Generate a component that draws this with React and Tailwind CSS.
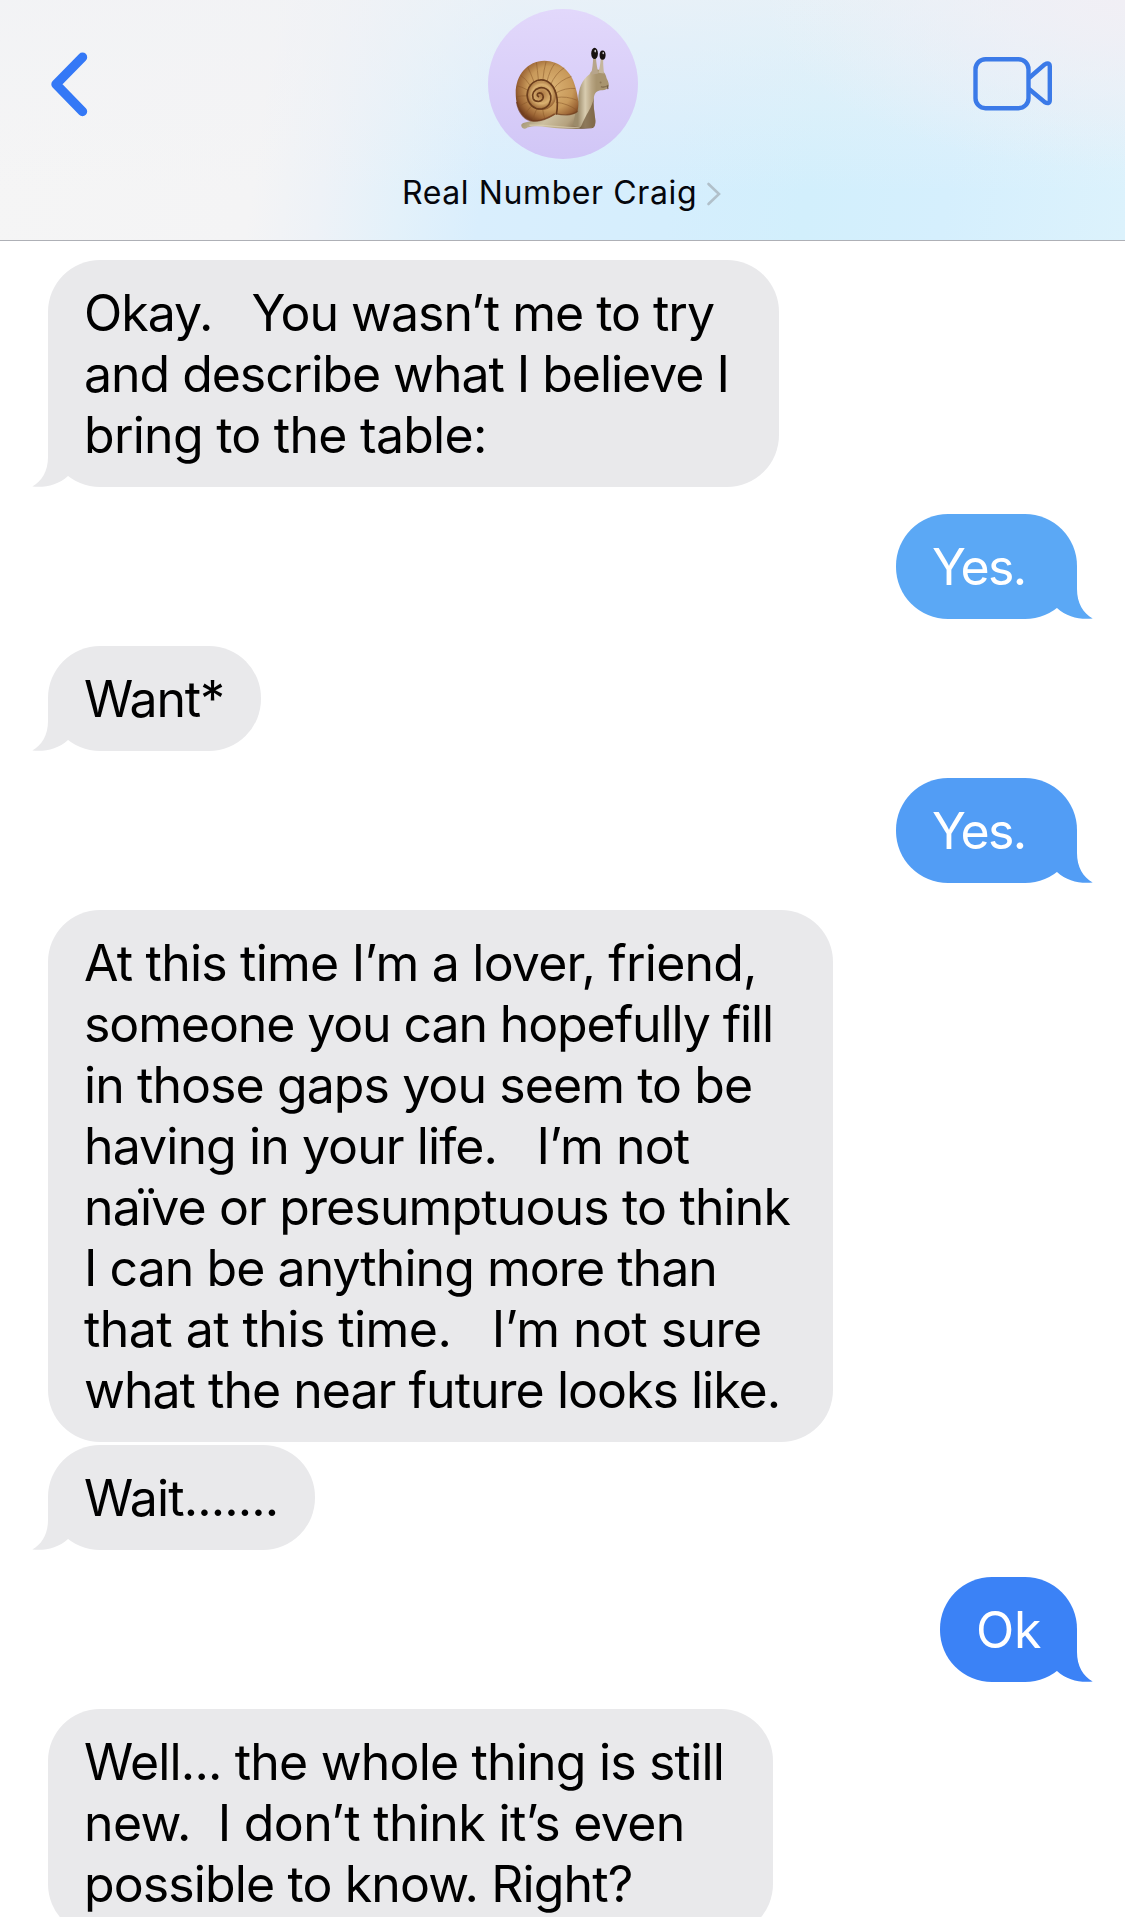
import clsx from "clsx";

// each line keeps its own tracking, [text, letter spacing in px]
const messages = [
  {
    id: 1,
    from: "them",
    tail: true,
    size: "w-[731px] mt-[19px]",
    lines: [
      ["Okay.   You wasn’t me to try", -1.01],
      ["and describe what I believe I", -1.04],
      ["bring to the table:", -0.74],
    ],
  },
  {
    id: 2,
    from: "me",
    tail: true,
    size: "w-[181px] mt-[27px]",
    color: "bg-[#5ba8f5] text-[#5ba8f5]",
    lines: [["Yes.", -1.6]],
  },
  {
    id: 3,
    from: "them",
    tail: true,
    size: "w-[213px] mt-[27px]",
    lines: [["Want*", -1.2]],
  },
  {
    id: 4,
    from: "me",
    tail: true,
    size: "w-[181px] mt-[27px]",
    color: "bg-[#529df5] text-[#529df5]",
    lines: [["Yes.", -1.6]],
  },
  {
    id: 5,
    from: "them",
    tail: false,
    size: "w-[785px] mt-[27px]",
    lines: [
      ["At this time I’m a lover, friend,", -0.79],
      ["someone you can hopefully fill", -1.11],
      ["in those gaps you seem to be", -0.92],
      ["having in your life.   I’m not", -0.92],
      ["naïve or presumptuous to think", -0.86],
      ["I can be anything more than", -0.95],
      ["that at this time.   I’m not sure", -0.55],
      ["what the near future looks like.", -0.98],
    ],
  },
  {
    id: 6,
    from: "them",
    tail: true,
    size: "w-[267px] mt-[3px]",
    lines: [["Wait.......", -0.9]],
  },
  {
    id: 7,
    from: "me",
    tail: true,
    size: "w-[137px] mt-[27px]",
    color: "bg-[#3b82f6] text-[#3b82f6]",
    lines: [["Ok", -0.3]],
  },
  {
    id: 8,
    from: "them",
    tail: false,
    size: "w-[725px] mt-[27px]",
    lines: [
      ["Well... the whole thing is still", -0.82],
      ["new.  I don’t think it’s even", -0.65],
      ["possible to know. Right?", -0.88],
    ],
  },
];

const Snail = () => (
  <svg className="w-[150px] h-[150px]" viewBox="26 27 449 449" fill="none">
    <defs>
      <linearGradient id="body" x1="0" y1="0" x2="1" y2="0.25">
        <stop offset="0" stopColor="#8f7f60" />
        <stop offset="0.45" stopColor="#cdc0a0" />
        <stop offset="0.75" stopColor="#b5a27f" />
        <stop offset="1" stopColor="#775f42" />
      </linearGradient>
      <linearGradient id="neck" x1="295" y1="0" x2="350" y2="0" gradientUnits="userSpaceOnUse">
        <stop offset="0" stopColor="#9c8b6a" />
        <stop offset="0.4" stopColor="#d8ccb0" />
        <stop offset="0.75" stopColor="#b9a684" />
        <stop offset="1" stopColor="#a8946f" />
      </linearGradient>
      <radialGradient id="shell" cx="0.55" cy="0.45" r="0.6">
        <stop offset="0" stopColor="#dcb476" />
        <stop offset="0.6" stopColor="#c8995a" />
        <stop offset="0.86" stopColor="#9c6535" />
        <stop offset="1" stopColor="#74401f" />
      </radialGradient>
      <radialGradient id="whorl" cx="0.5" cy="0.45" r="0.55">
        <stop offset="0" stopColor="#a87440" />
        <stop offset="0.6" stopColor="#d9b070" />
        <stop offset="1" stopColor="#935d2e" />
      </radialGradient>
    </defs>
    {/* foot */}
    <path
      d="M126 378C124 370 132 367 140 366C165 360 190 346 225 338L300 325C325 320 344 335 347 360C348 374 346 382 336 384C290 388 240 385 205 381C180 377 160 377 144 382C137 388 128 386 126 378Z"
      fill="url(#body)"
    />
    <path d="M150 375C200 372 250 384 300 382" stroke="#e0d5b8" strokeWidth="4" opacity="0.6" />
    {/* neck and head */}
    <path
      d="M296 300C297 262 307 240 330 222C333 214 340 209 352 208C368 208 378 218 381 234C386 243 389 252 387 260C384 268 375 271 364 270C352 271 345 278 343 292C340 315 345 335 347 356C348 374 344 382 330 383C312 384 292 382 280 374Z"
      fill="url(#neck)"
    />
    <path d="M343 292C338 320 322 340 317 352C308 368 306 380 300 383H330C345 383 348 372 347 356C345 335 340 315 343 292Z" fill="#6d5538" opacity="0.7" />
    <path d="M364 260C372 262 380 260 386 255" stroke="#7c6649" strokeWidth="3" />
    <circle cx="363" cy="247" r="3" fill="#8d7755" />
    <path d="M384 258L385 267" stroke="#5c4a38" strokeWidth="3" />
    {/* stalks and eyes */}
    <path d="M334 224C339 205 340 190 341 172H349C350 192 354 205 356 220Z" fill="#b7a58b" />
    <path d="M356 218C361 203 362 190 364 174H371C370 192 372 204 373 220Z" fill="#c5b69c" />
    <ellipse cx="345" cy="160" rx="10" ry="17" fill="#17110f" />
    <ellipse cx="369" cy="165" rx="9" ry="14" fill="#17110f" />
    <ellipse cx="347" cy="153" rx="2.5" ry="4" fill="#c9c5c8" />
    <ellipse cx="371" cy="159" rx="2.5" ry="3.5" fill="#c9c5c8" />
    {/* shell */}
    <path
      d="M231 341C265 347 287 343 294 332C300 310 294 280 286 255C276 215 240 183 195 182C145 182 108 225 109 280C109 325 130 360 162 363C190 364 212 350 231 341Z"
      fill="url(#shell)"
    />
    <g stroke="#875528" strokeWidth="2.5" opacity="0.6">
      <path d="M229 306Q265 310 292 330" />
      <path d="M230 292Q262 287 292 300" />
      <path d="M228 279Q257 262 287 265" />
      <path d="M222 266Q244 238 276 229" />
      <path d="M213 254Q228 220 254 203" />
      <path d="M202 246Q211 209 226 190" />
      <path d="M190 241Q193 208 200 184" />
      <path d="M177 240Q174 210 171 187" />
      <path d="M164 246Q153 217 145 201" />
      <path d="M153 257Q138 234 124 226" />
      <path d="M147 271Q126 259 113 257" />
      <path d="M145 287Q126 286 110 290" />
      <path d="M149 303Q131 311 117 320" />
      <path d="M157 317Q143 330 135 346" />
      <path d="M172 326Q164 342 160 360" />
      <path d="M190 328Q191 342 196 354" />
    </g>
    <path d="M231 341C260 347 287 343 294 332" stroke="#70401f" strokeWidth="4" opacity="0.7" />
    <circle cx="187" cy="286" r="43" fill="url(#whorl)" />
    <path
      d="M231 341C238 300 231 258 203 243C172 230 145 252 143 284C144 312 165 329 188 326C208 322 216 305 214 287C210 268 195 260 180 263C163 268 156 282 161 295C167 306 184 307 190 296C194 286 188 278 180 278C173 279 171 286 177 289"
      stroke="#6b3d1c"
      strokeWidth="5"
      strokeLinecap="round"
    />
    <path d="M112 305C118 340 138 361 162 362C190 364 211 351 226 341" stroke="#703c20" strokeWidth="5" opacity="0.75" />
  </svg>
);

const BackIcon = () => (
  <svg className="w-[40px] h-[68px]" viewBox="0 0 40 68" fill="none">
    <path
      d="M33.5 7.2L7 34.3L33.5 61.5"
      stroke="#3478f6"
      strokeWidth="9.4"
      strokeLinecap="round"
      strokeLinejoin="round"
    />
  </svg>
);

const VideoIcon = () => (
  <svg className="w-[80px] h-[54px]" viewBox="0 0 80 54" fill="none" stroke="#3b7ae8" strokeWidth="4.4">
    <rect x="2.5" y="2.2" width="53" height="49" rx="10" />
    <path d="M56 21L71.5 7.6Q76.8 4.5 76.8 9.5V43Q76.8 48 71.5 45L56 32" />
  </svg>
);

const Header = () => (
  <header className="h-[241px] border-b border-[#aeb0b6] bg-[radial-gradient(ellipse_360px_170px_at_100%_0%,#f1eff5_0%,#f1eff500_100%),linear-gradient(to_bottom,#f1f2f5a6_0%,#f1f2f500_80%),linear-gradient(98deg,#f5f5f5_0%,#f4f4f5_24%,#eef2f7_30%,#e3f1fa_37%,#d9eefd_44%,#d5eefd_60%,#d2effc_72%,#d5effd_84%,#dcf2fc_100%)]">
    <div className="grid grid-cols-[1fr_150px_1fr] items-start pt-[9px]">
      <button type="button" aria-label="Back" className="justify-self-start pt-[41px] pl-[49px]">
        <BackIcon />
      </button>
      <div className="w-[150px] h-[150px] rounded-full bg-linear-to-b from-[#e2d8fb] to-[#d1c6f6]">
        <Snail />
      </div>
      <button type="button" aria-label="Video call" className="justify-self-end pt-[48px] pr-[72px]">
        <VideoIcon />
      </button>
    </div>
    <div className="flex items-center pl-[402px] h-[68px]">
      <span className="text-[32px] leading-[40px] tracking-[0.6px] text-[#05060c] whitespace-pre">
        Real Number Craig
      </span>
      <svg className="w-[16px] h-[24px] ml-[9px] mt-[2px]" viewBox="0 0 16 24" fill="none">
        <path d="M2.5 2L13 12L2.5 22" stroke="#b1c0ca" strokeWidth="2.6" strokeLinecap="round" />
      </svg>
    </div>
  </header>
);

const Tail = ({ mine }) => (
  <svg
    className={clsx(
      "absolute bottom-0 w-[36px] h-[53px]",
      mine ? "right-[-16px] -scale-x-100" : "left-[-16px]"
    )}
    viewBox="-16 -53 36 53"
    fill="currentColor"
  >
    <path d="M0 -53V-30C0 -16 -6 -6 -15.7 -0.5C-3 1 10 -2 20 -11L20 -53Z" />
  </svg>
);

const Bubble = ({ message }) => {
  const mine = message.from === "me";

  return (
    <div
      className={clsx(
        "relative shrink-0 rounded-[52px] pt-[23px] pb-[21px] pl-9",
        message.size,
        mine ? "self-end" : "self-start bg-[#e9e9eb] text-[#e9e9eb]",
        message.color
      )}
    >
      {message.tail && <Tail mine={mine} />}
      {message.lines.map(([text, spacing]) => (
        <p
          key={text}
          className={clsx(
            "relative whitespace-pre text-[50px] leading-[61px]",
            mine ? "text-white" : "text-black"
          )}
          style={{ letterSpacing: `${spacing}px` }}
        >
          {text}
        </p>
      ))}
    </div>
  );
};

const App = () => {
  return (
    <div className="w-[1125px] h-[1917px] overflow-hidden bg-white font-['Inter',sans-serif]">
      <Header />
      <main className="flex flex-col px-12">
        {messages.map((message) => (
          <Bubble key={message.id} message={message} />
        ))}
      </main>
    </div>
  );
};

export default App;
